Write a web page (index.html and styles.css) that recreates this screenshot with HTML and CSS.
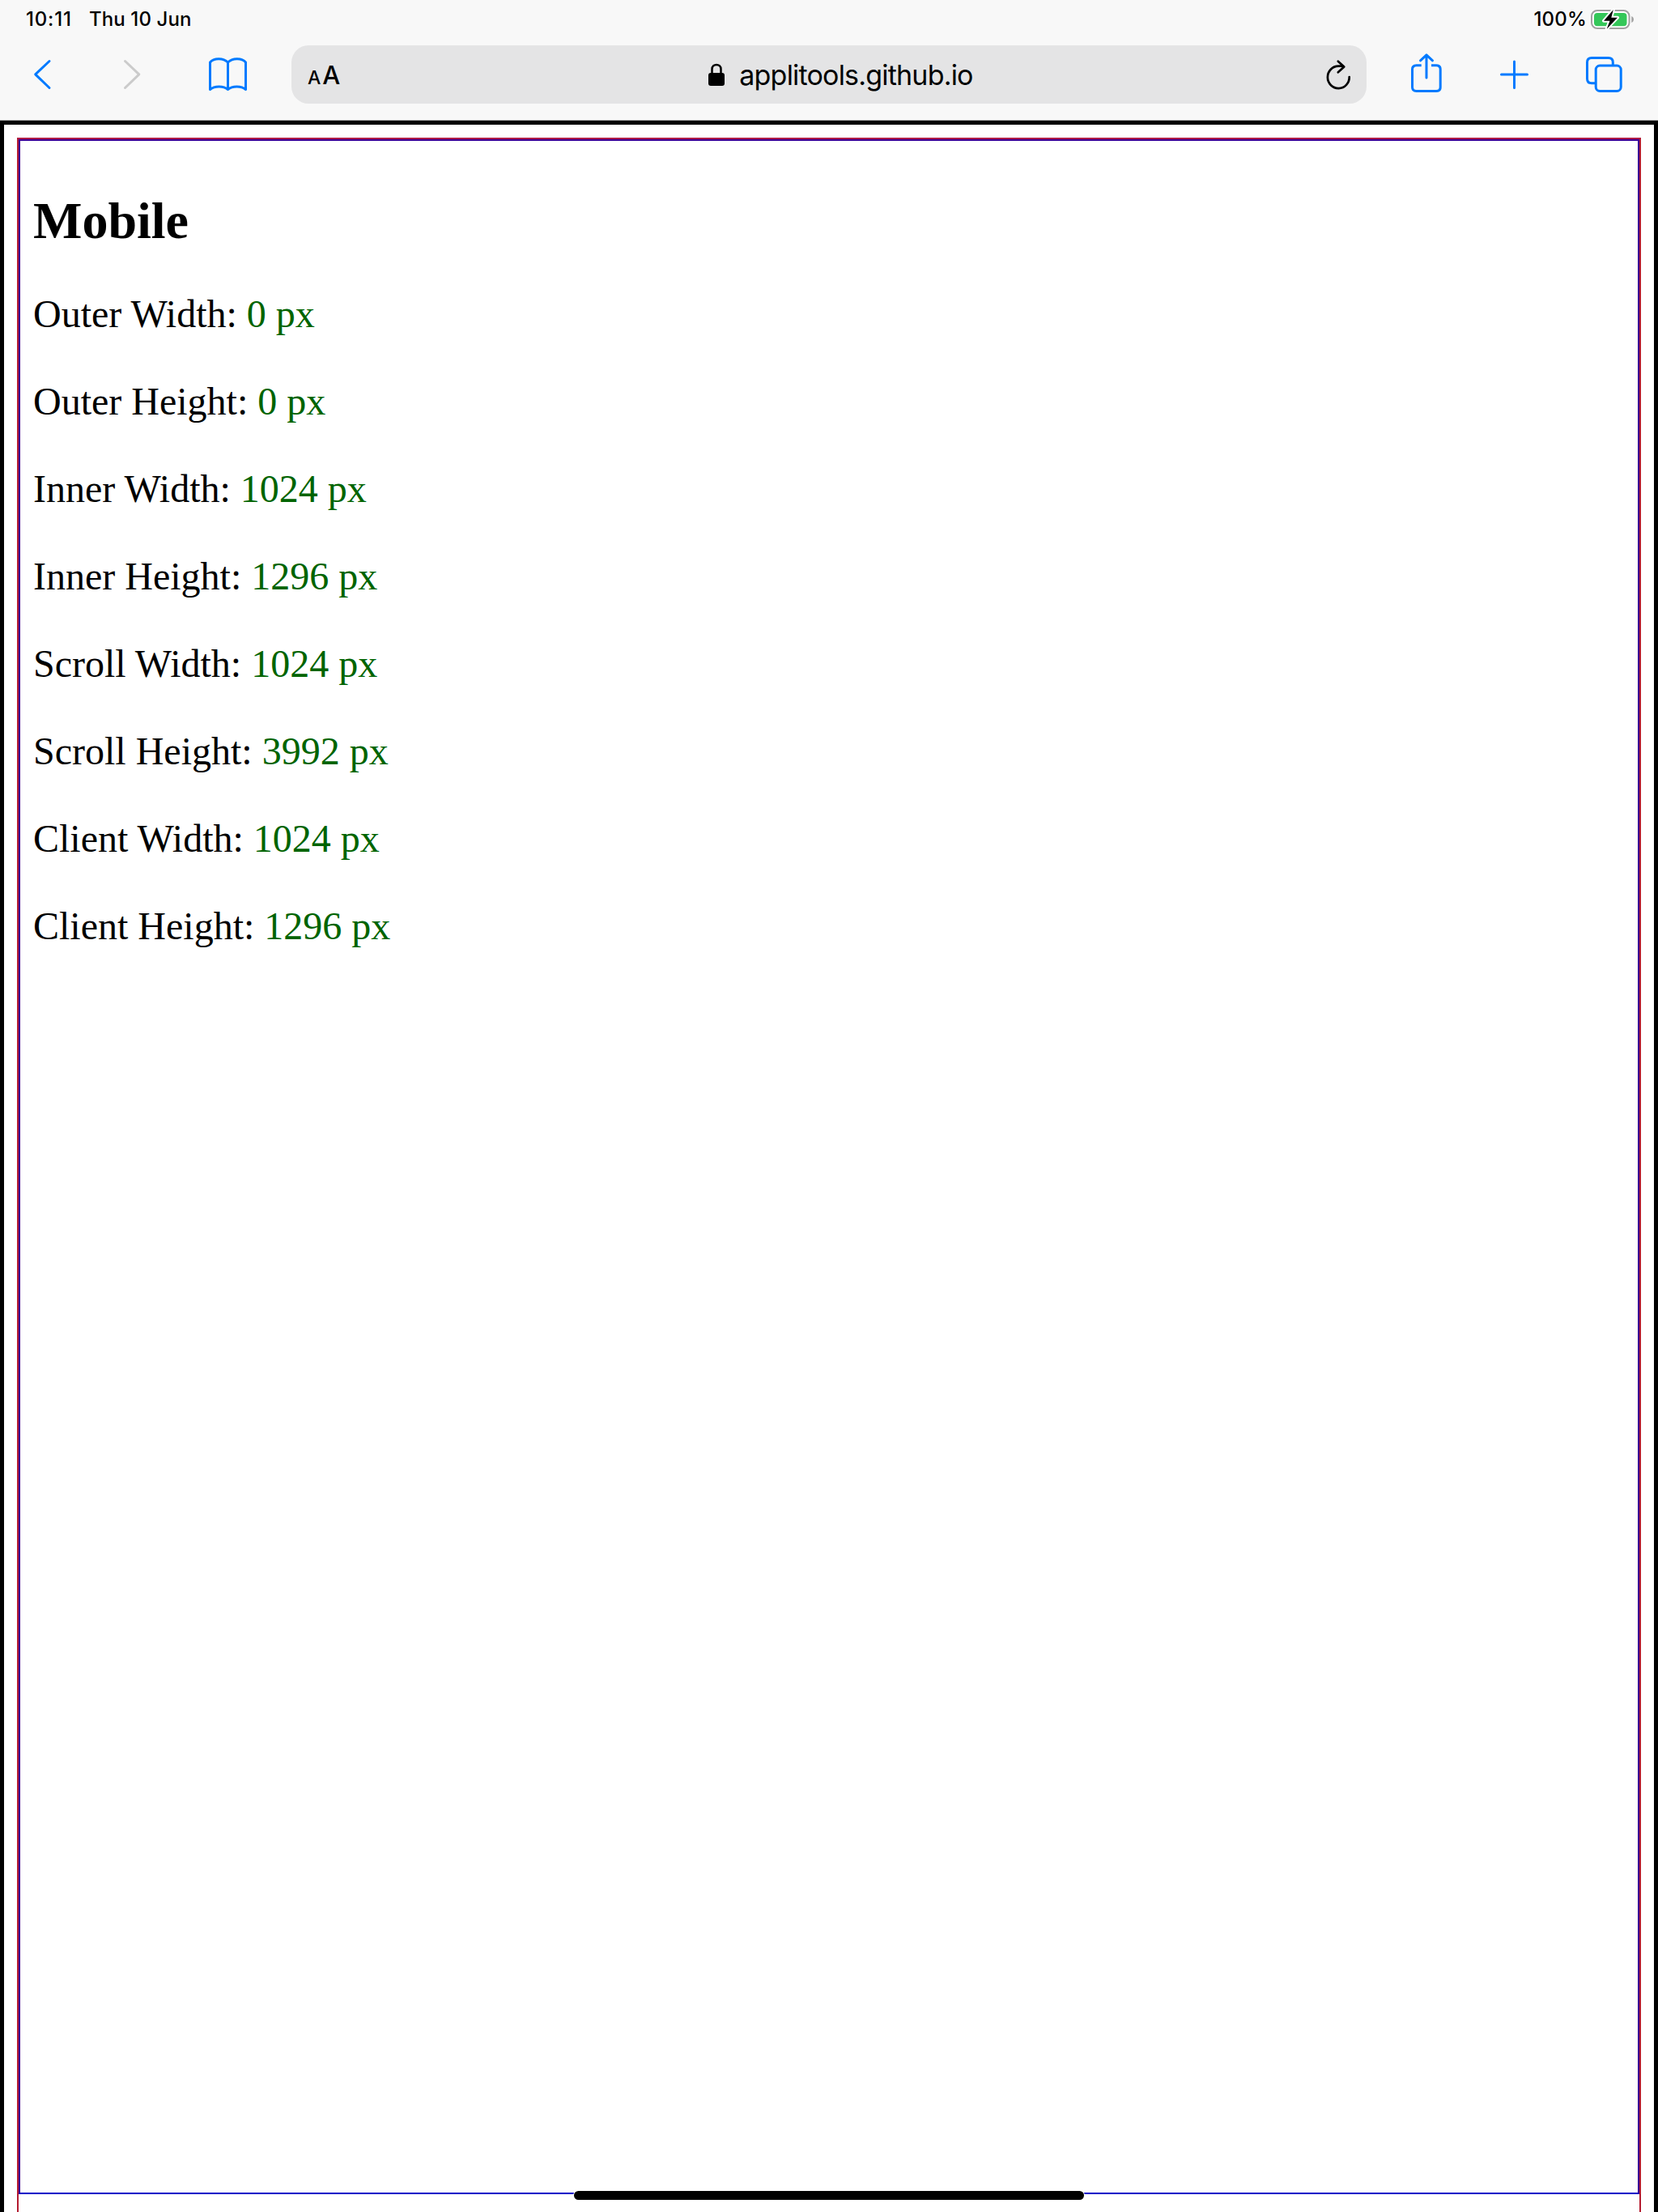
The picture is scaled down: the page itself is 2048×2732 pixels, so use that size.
FILE: index.html
```html
<!DOCTYPE html>
<html lang="en">
<head>
<meta charset="utf-8">
<title>Mobile</title>
<link rel="stylesheet" href="styles.css">
</head>
<body>
<header class="chrome">
  <div class="status">
    <span class="time">10:11</span>
    <span class="date">Thu 10 Jun</span>
    <span class="percent">100%</span>
    <svg class="battery" viewBox="1963 10 58 28" width="58" height="28">
      <rect x="1966" y="13" width="46.5" height="22" rx="7" fill="#fff" stroke="#a1a1a1" stroke-width="2"/>
      <rect x="1969" y="16" width="40.5" height="16.3" rx="4" fill="#34c759"/>
      <path d="M2015.3 20c3.5 1.200 3.500 6.800 0 8z" fill="#a1a1a1"/>
      <path d="M1992.800 12 1981 25.700h7.500l-3.800 10L1998 21.700h-7.700z" fill="#000" stroke="#fff" stroke-width="4" paint-order="stroke" stroke-linejoin="round"/>
    </svg>
  </div>
  <nav class="toolbar">
    <svg class="icon" viewBox="0 40 107 108" width="107" height="108"><path d="M61 75.500 43.700 91.800 61 108.500"/></svg>
    <svg class="icon disabled" viewBox="107 40 113 108" width="113" height="108"><path d="M154.500 75.500 171.800 91.800 154.500 108.500"/></svg>
    <svg class="icon" viewBox="220 40 140 108" width="140" height="108"><path d="M281.500 110.500V77C276 71.300 264 71.300 259.500 77V110.500C265 105.800 276 105.800 281.500 110.500C287 105.800 298 105.800 303.500 110.500V77C299 71.300 287 71.300 281.500 77"/></svg>
    <div class="address">
      <span class="reader"><span class="small-a">A</span><span class="big-a">A</span></span>
      <span class="site">
        <svg viewBox="874 78 22 29" width="22" height="29"><path d="M879.500 91v-5.500c0-7.500 11-7.500 11 0V91" fill="none" stroke="#000" stroke-width="2.500"/><rect x="875" y="90" width="20" height="16" rx="3"/></svg>
        <span class="url">applitools.github.io</span>
      </span>
      <svg class="icon reload" viewBox="1630 56 58 72" width="58" height="72"><path d="M1666.700 95A13.400 13.700 0 1 1 1653.300 81.700H1659M1652.800 75.700 1660.300 82.400 1652.800 89.300"/></svg>
    </div>
    <svg class="icon" viewBox="1688 40 128 108" width="128" height="108"><path d="M1755.700 80.800H1749.500Q1744.500 80.800 1744.500 85.800V107.500Q1744.500 112.500 1749.500 112.500H1774.200Q1779.200 112.500 1779.200 107.500V85.800Q1779.200 80.800 1774.200 80.800H1768" stroke-linecap="butt"/><path d="M1762 96V68.500M1754.500 74.800 1762 67.800 1769.500 74.800"/></svg>
    <svg class="icon" viewBox="1816 40 104 108" width="104" height="108"><path d="M1854.500 92H1886.500M1870.500 76V108.500"/></svg>
    <svg class="icon" viewBox="1920 40 128 108" width="128" height="108"><path d="M1970.500 102.700H1966Q1960.500 102.700 1960.500 97.200V77Q1960.500 71.500 1966 71.500H1986.800Q1992.300 71.500 1992.300 77V80.500" stroke-linecap="butt"/><rect x="1971.200" y="81" width="31" height="31.500" rx="5"/></svg>
  </nav>
</header>
<main class="page">
  <div class="outer">
    <section class="inner">
      <h2>Mobile</h2>
      <p>Outer Width: <span>0 px</span></p>
      <p>Outer Height: <span>0 px</span></p>
      <p>Inner Width: <span>1024 px</span></p>
      <p>Inner Height: <span>1296 px</span></p>
      <p>Scroll Width: <span>1024 px</span></p>
      <p>Scroll Height: <span>3992 px</span></p>
      <p>Client Width: <span>1024 px</span></p>
      <p>Client Height: <span>1296 px</span></p>
    </section>
  </div>
</main>
<div class="home-indicator"></div>
</body>
</html>
```
FILE: styles.css
```css
* { box-sizing: border-box; }
body {
  margin: 0;
  width: 2048px;
  height: 2732px;
  overflow: hidden;
  position: relative;
  background: #fff;
}
svg { display: block; flex: none; }

.chrome {
  height: 149px;
  background: #f8f8f8;
  border-bottom: 1px solid #b0b0b0;
  font-family: Inter, "Liberation Sans", sans-serif;
  color: #000;
}
.status {
  display: flex;
  align-items: center;
  height: 40px;
  padding: 8px 27px 0 32px;
  font-size: 24px;
  font-weight: 450;
  line-height: 32px;
  white-space: nowrap;
}
.time { width: 78px; letter-spacing: 0.8px; }
.date { letter-spacing: 0.1px; }
.percent { margin-left: auto; margin-right: 3px; letter-spacing: 0.2px; }

.toolbar { display: flex; height: 108px; }
.icon {
  fill: none;
  stroke: #007aff;
  stroke-width: 3;
  stroke-linecap: round;
  stroke-linejoin: round;
}
.disabled { stroke: #cbcbcb; }
.reload { stroke: #000; stroke-width: 2.7; }
.address {
  display: flex;
  justify-content: space-between;
  width: 1328px;
  height: 72px;
  margin-top: 16px;
  border-radius: 21px;
  background: #e4e4e5;
  line-height: 72px;
  white-space: nowrap;
}
.reader {
  display: flex;
  align-items: baseline;
  gap: 2px;
  width: 80px;
  padding: 1px 0 0 20px;
  font-weight: 450;
}
.small-a { font-size: 23px; }
.big-a { font-size: 31px; }
.site { display: flex; align-items: center; gap: 17px; margin-left: 6px; }
.url { padding-top: 2px; font-size: 34px; letter-spacing: -0.8px; }

.page {
  height: 2583px;
  padding: 16px 16px 0;
  border: 5px solid #000;
  border-bottom: 0;
  overflow: hidden;
}
.outer {
  height: 2700px;
  border: 2px solid #b41c30;
  border-top-color: #b01c48;
}
.inner {
  height: 2538px;
  padding: 21px 16px 0;
  border: 2px solid #3a0096;
  border-bottom-color: #0000c8;
  font-family: "Liberation Serif", serif;
}
h2 { margin: 16px 0 0; font-size: 64px; line-height: 123px; }
p { margin: 0; font-size: 48px; line-height: 108px; }
p span { color: #006400; }

.home-indicator {
  position: absolute;
  left: 709px;
  top: 2706px;
  width: 630px;
  height: 11px;
  border-radius: 6px;
  background: #000;
  box-shadow: 0 0 0 1px #fff;
}
```
